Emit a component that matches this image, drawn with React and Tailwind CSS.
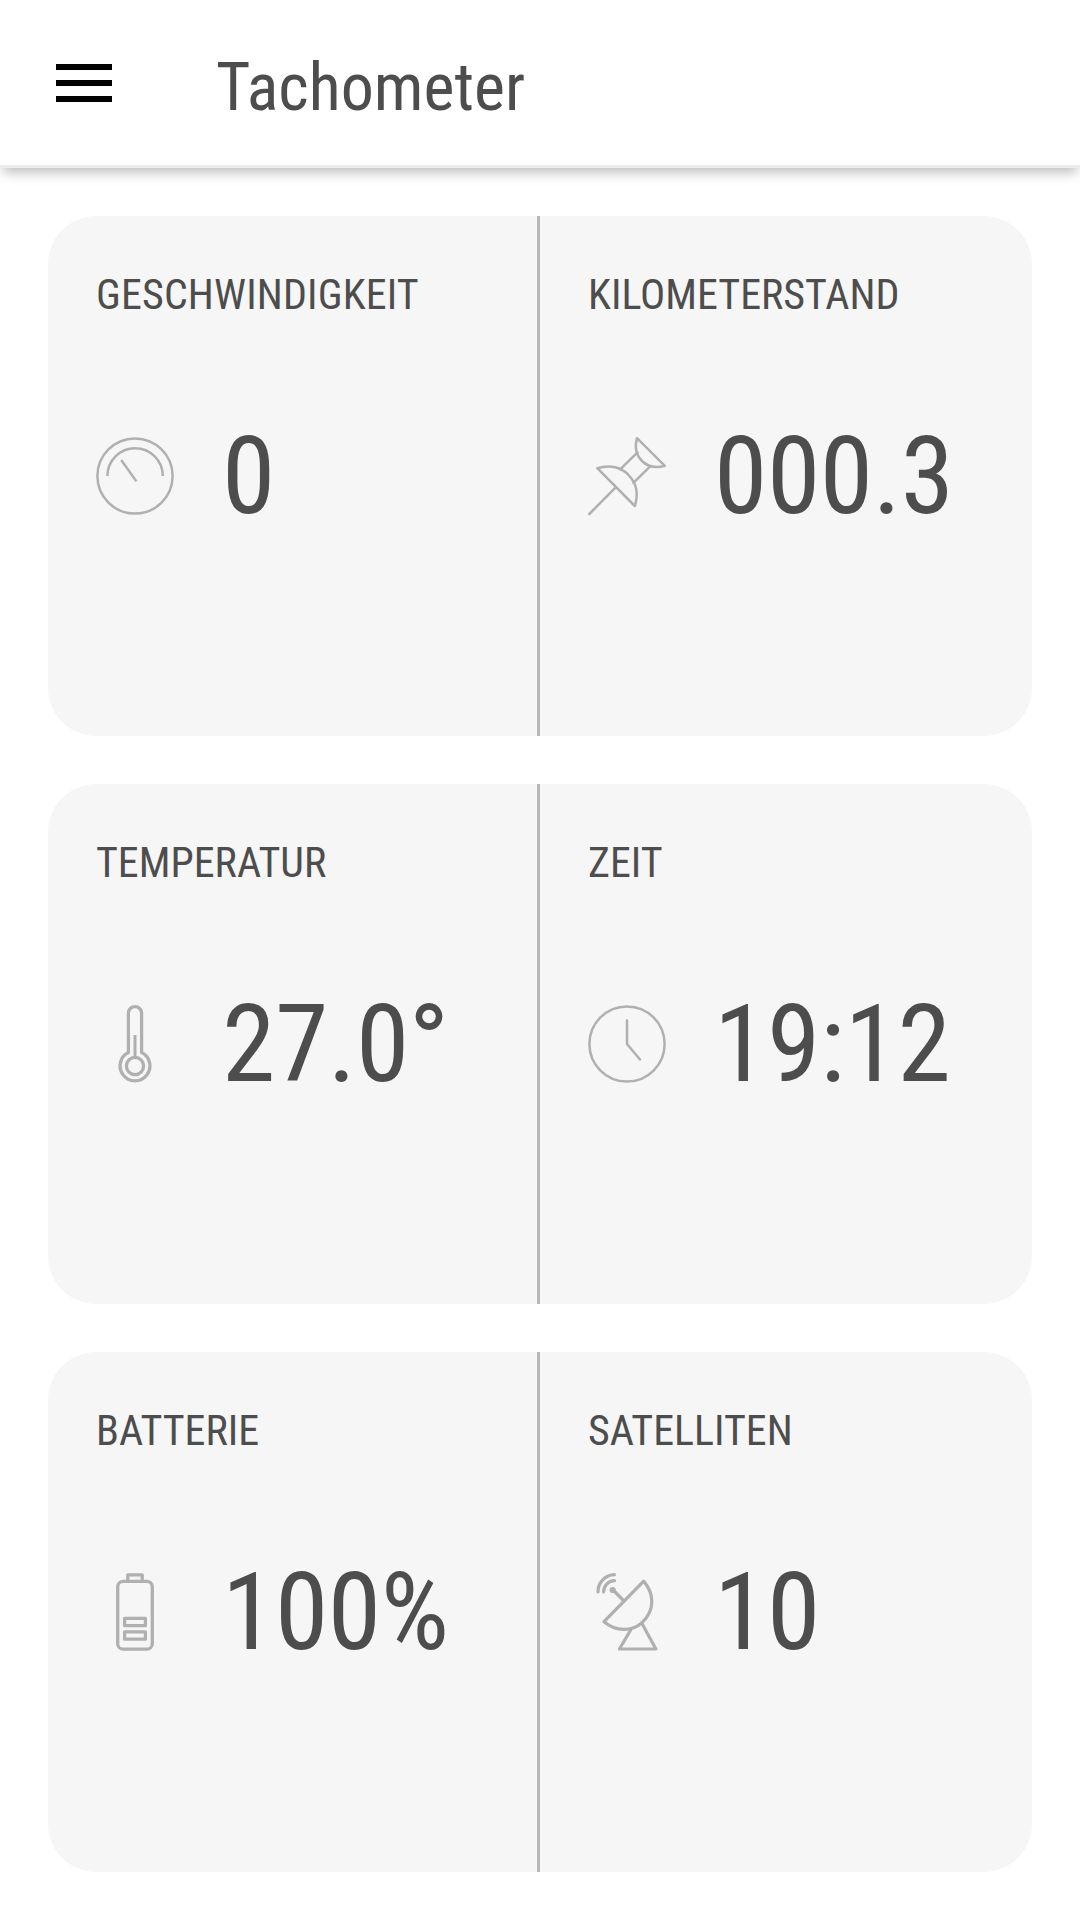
import React from "react";

function Icon({ strokeWidth = 2.5, children }) {
  return (
    <svg
      className="h-[78px] w-[78px] shrink-0 overflow-visible text-[#b0b0b0]"
      viewBox="0 0 78 78"
      fill="none"
      stroke="currentColor"
      strokeWidth={strokeWidth}
      strokeLinecap="round"
      strokeLinejoin="round"
    >
      {children}
    </svg>
  );
}

function GaugeIcon() {
  return (
    <Icon>
      <circle cx="39" cy="39" r="37.6" />
      <path d="M11.4 39a27.6 27.6 0 0 1 55.4 0" strokeLinecap="butt" />
      <path d="M25.2 23L40.4 44.4" strokeLinecap="butt" />
    </Icon>
  );
}

function PinIcon() {
  return (
    <Icon>
      <path d="M1.3 77L27.7 50.4" />
      <path d="M9.3 31.2L46.8 69C51 56 47.5 45.5 41 38.5C34 30.5 22 27 9.3 31.2Z" />
      <path d="M49 1.2L76.8 28.9C67 31.500 60 30 54 24C49 19 46 12 49 1.200Z" />
      <path d="M32.2 32.3L49.5 15.4M45.4 45.8L62.2 29.3" />
    </Icon>
  );
}

function ThermometerIcon() {
  return (
    <Icon strokeWidth={3.3}>
      <path d="M32.4 47.6V8.2a6.6 6.6 0 0 1 13.2 0V47.6A14.9 14.9 0 1 1 32.4 47.6Z" />
      <circle cx="39" cy="61" r="8.6" />
      <path d="M39 30V52" strokeWidth="3" strokeLinecap="butt" />
    </Icon>
  );
}

function ClockIcon() {
  return (
    <Icon>
      <circle cx="39" cy="39" r="37.6" />
      <path d="M39 15.4V39L52 54.5" />
    </Icon>
  );
}

function BatteryIcon() {
  return (
    <Icon strokeWidth={3.3}>
      <rect x="21.7" y="8.3" width="34.6" height="67.9" rx="5.5" />
      <path d="M31.8 8V1.8H46.2V8" />
      <rect x="28.6" y="45.3" width="20.8" height="7.4" />
      <rect x="28.6" y="58.8" width="20.8" height="7.4" />
    </Icon>
  );
}

function SatelliteIcon() {
  return (
    <Icon strokeWidth={3.2}>
      <path d="M16 48.7L55.7 8.1C66.500 21 67 37 54.300 49.300C44 59 28 58.800 16 48.700Z" />
      <path d="M36 28L25 17" />
      <circle cx="24.7" cy="17" r="3.1" fill="currentColor" stroke="none" />
      <path d="M26.5 7.7A11 11 0 0 0 15.6 18.900" />
      <path d="M26.5 1.6A17 17 0 0 0 10 18.9" />
      <path d="M43 56.5L31.4 76H67.9L53.7 50" />
    </Icon>
  );
}

const cards = [
  [
    { label: "GESCHWINDIGKEIT", value: "0", icon: <GaugeIcon />, labelClass: "tracking-[0.14px]" },
    { label: "KILOMETERSTAND", value: "000.3", icon: <PinIcon /> },
  ],
  [
    { label: "TEMPERATUR", value: "27.0°", icon: <ThermometerIcon /> },
    { label: "ZEIT", value: "19:12", icon: <ClockIcon /> },
  ],
  [
    { label: "BATTERIE", value: "100%", icon: <BatteryIcon /> },
    { label: "SATELLITEN", value: "10", icon: <SatelliteIcon /> },
  ],
];

function Tile({ label, value, icon, labelClass = "" }) {
  return (
    <div className="flex h-full w-1/2 flex-col border-[#b7b7b7] px-12 pt-[54px] first:border-r-3">
      <h2 className={`text-[42px] leading-[50px] ${labelClass}`}>{label}</h2>
      <div className="mt-[92px] flex h-32 items-center gap-12">
        {icon}
        <span className="text-[108px] leading-none tracking-[-0.4px] whitespace-nowrap">{value}</span>
      </div>
    </div>
  );
}

function App() {
  return (
    <div className="h-[1920px] w-[1080px] overflow-hidden bg-white font-['Roboto_Condensed','Roboto',sans-serif] text-[#4d4d4d] [font-stretch:75%]">
      <header className="flex h-[168px] items-center border-b-3 border-[#ececec] shadow-[0_7px_12px_-3px_rgba(0,0,0,0.28)]">
        <button className="ml-14 flex w-14 flex-col gap-2.5">
          <span className="h-1.5 w-full bg-black" />
          <span className="h-1.5 w-full bg-black" />
          <span className="h-1.5 w-full bg-black" />
        </button>
        <h1 className="ml-[104px] pt-2.5 text-[66px] leading-none">Tachometer</h1>
      </header>
      <main className="flex flex-col gap-12 p-12">
        {cards.map((tiles, index) => (
          <section key={index} className="flex h-[520px] overflow-hidden rounded-[48px] bg-[#f6f6f6]">
            {tiles.map((tile) => (
              <Tile key={tile.label} {...tile} />
            ))}
          </section>
        ))}
      </main>
    </div>
  );
}

export default App;
